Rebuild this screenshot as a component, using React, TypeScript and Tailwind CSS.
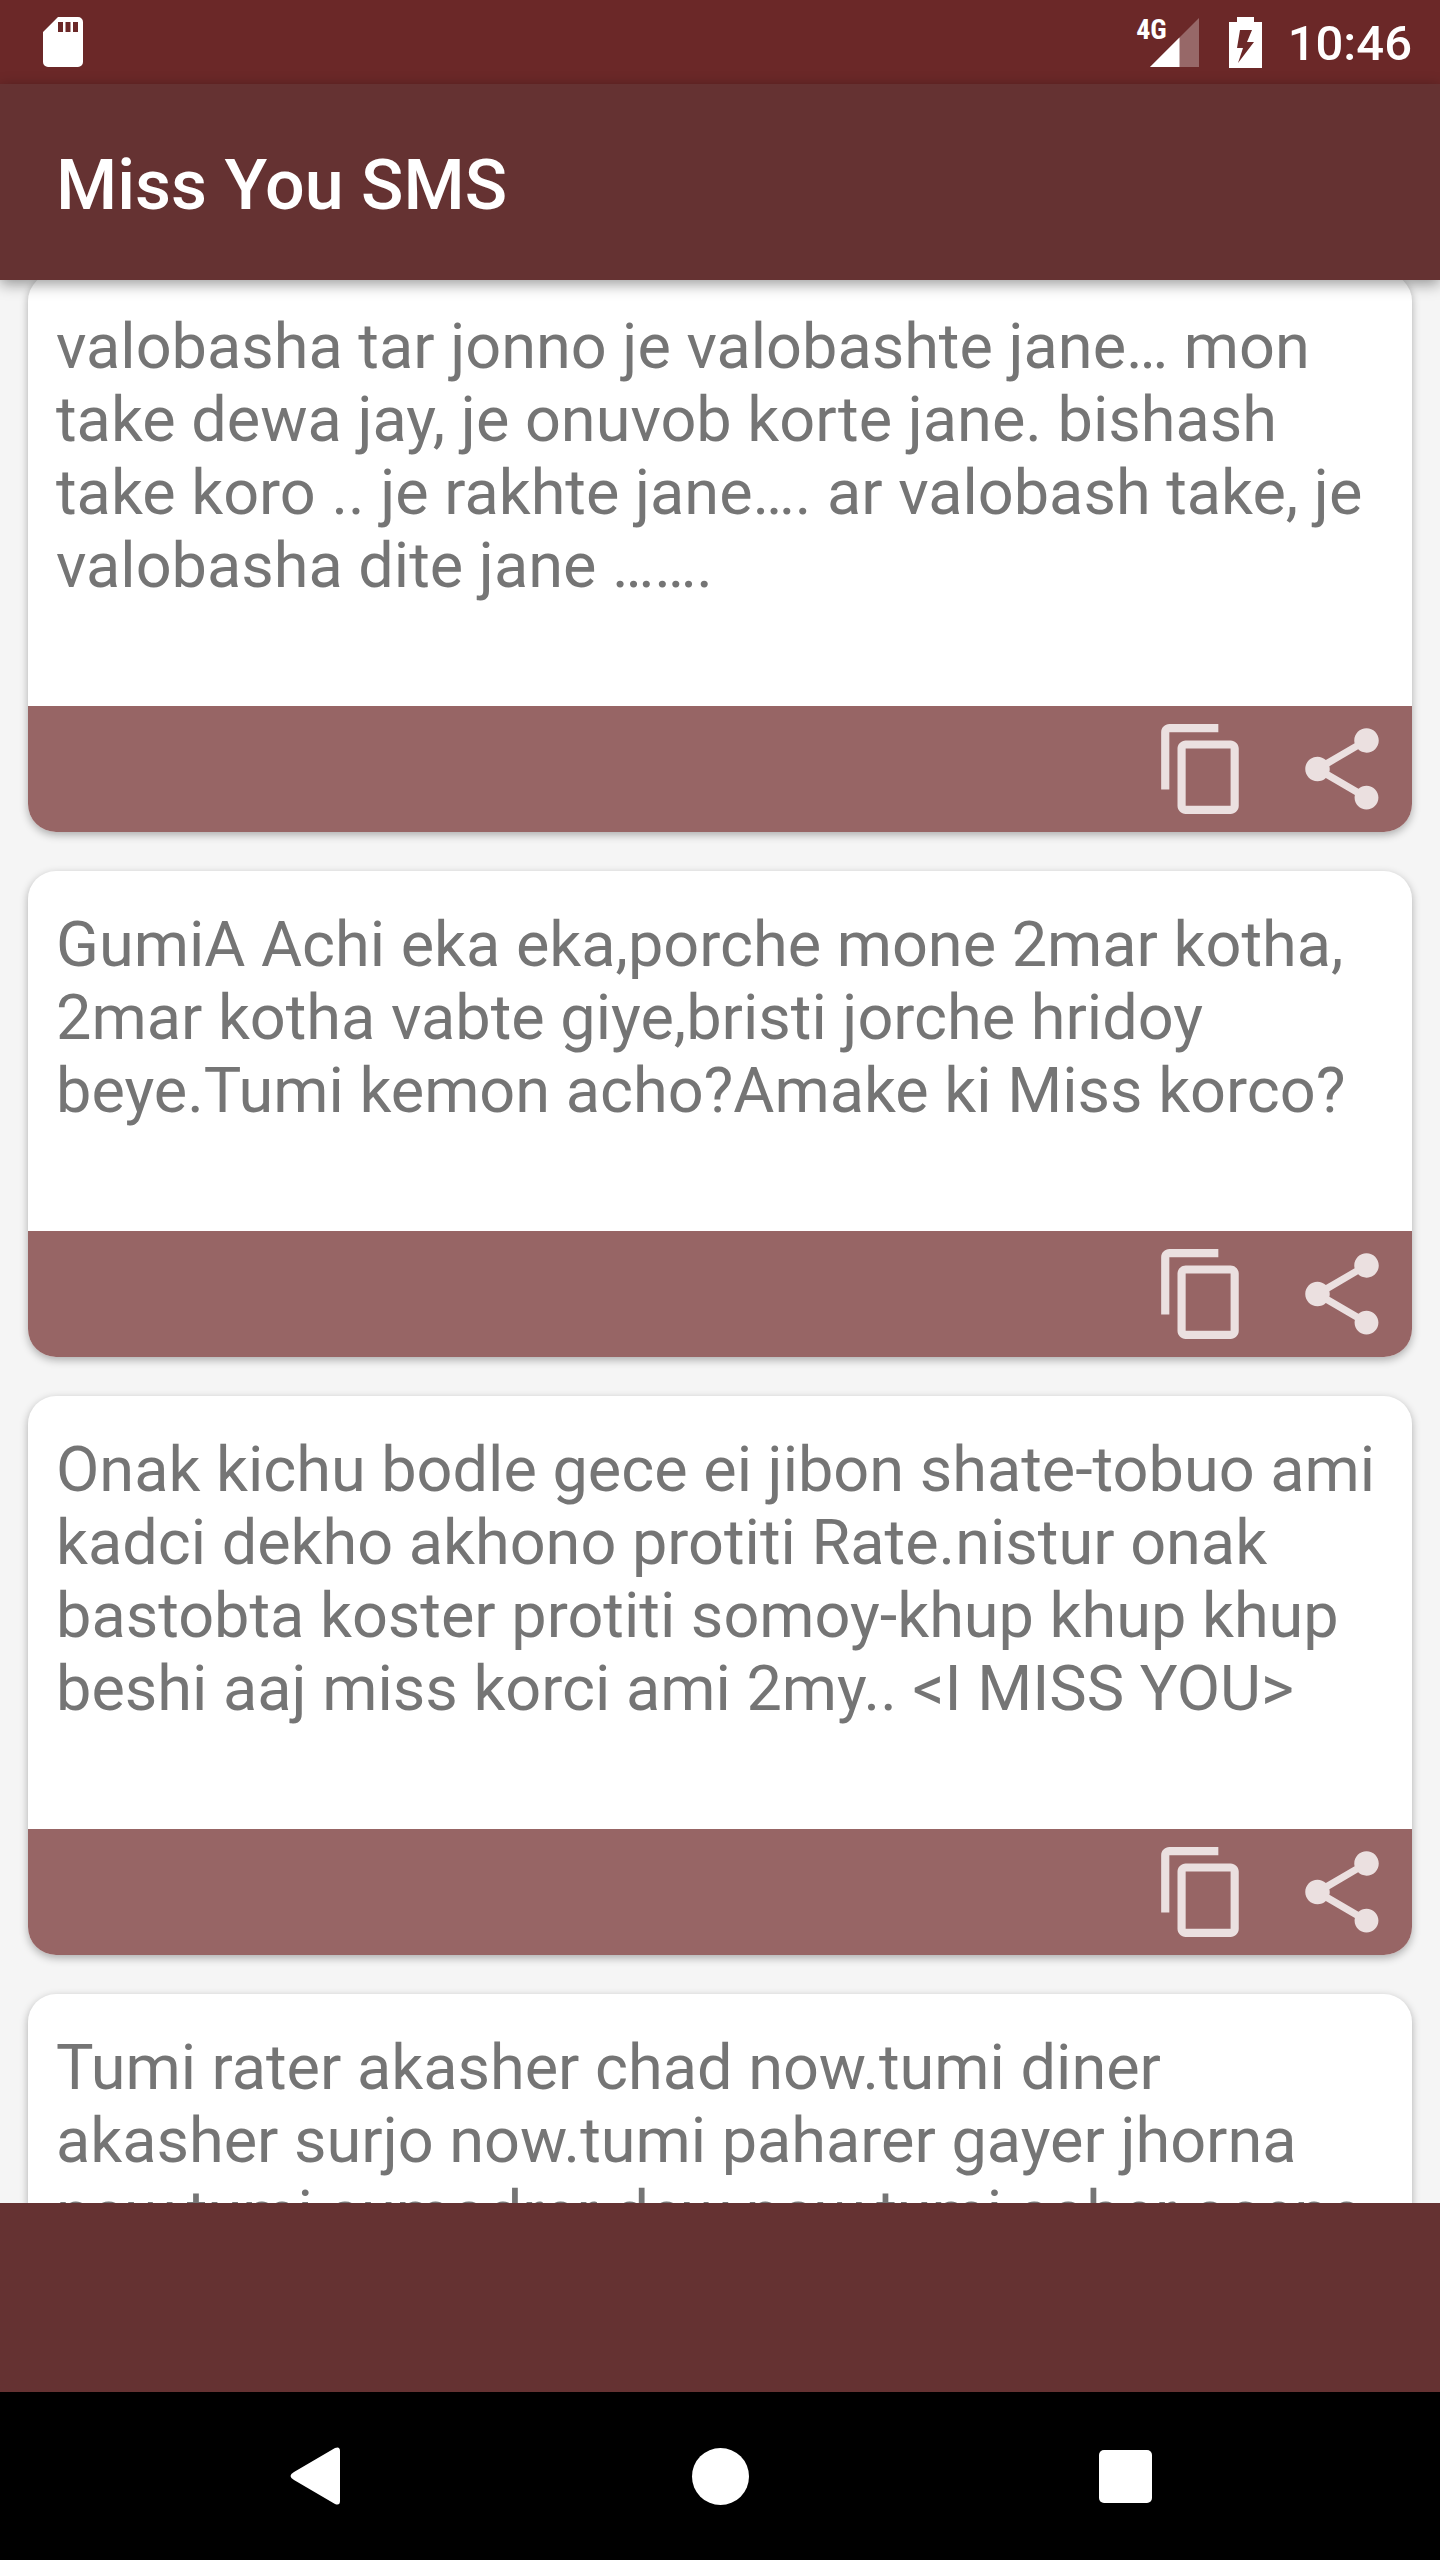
import React from 'react';

const messages = [
  'valobasha tar jonno je valobashte jane… mon take dewa jay, je onuvob korte jane. bishash take koro .. je rakhte jane…. ar valobash take, je valobasha dite jane …….',
  'GumiA Achi eka eka,porche mone 2mar kotha, 2mar kotha vabte giye,bristi jorche hridoy beye.Tumi kemon acho?Amake ki Miss korco?',
  'Onak kichu bodle gece ei jibon shate-tobuo ami kadci dekho akhono protiti Rate.nistur onak bastobta koster protiti somoy-khup khup khup beshi aaj miss korci ami 2my.. <I MISS YOU>',
  'Tumi rater akasher chad now.tumi diner akasher surjo now.tumi paharer gayer jhorna now.tumi sumodrer dew now.tumi sober ocene',
];

function StatusBar() {
  return (
    <header className="flex h-[84px] shrink-0 items-center justify-between bg-[#6b2828] pr-7 pl-[43px] text-white">
      <svg className="h-[50px] w-10" viewBox="0 0 40 50" fill="currentColor" aria-label="SD card">
        <path
          fillRule="evenodd"
          d="M15 0H35a5 5 0 0 1 5 5V45a5 5 0 0 1-5 5H5a5 5 0 0 1-5-5V15ZM15 5v10h5V5Zm7.500 0v10h5V5ZM30 5v10h5V5Z"
        />
      </svg>
      <div className="flex items-center">
        <div className="relative mr-[30px]">
          <svg className="h-[49px] w-[49px]" viewBox="0 0 49 49" aria-label="Signal">
            <path d="M49 0V49H0Z" fill="#fff" fillOpacity=".3" />
            <path d="M29.500 19.500V49H0Z" fill="#fff" />
          </svg>
          <span className="absolute top-0 right-8 font-['Roboto_Condensed','Roboto',sans-serif] text-[28px] leading-6 font-bold">
            4G
          </span>
        </div>
        <svg className="mr-[26px] h-[51px] w-[33px]" viewBox="0 0 33 51" aria-label="Battery charging">
          <path
            fill="#fff"
            fillRule="evenodd"
            d="M8 0H25V5H33V51H0V5H8ZM11 13L8 31H14L9 46L25 25H18L23 13Z"
          />
        </svg>
        <time className="pt-1 text-[49px] leading-[56px] font-medium">10:46</time>
      </div>
    </header>
  );
}

function MessageCard({ text }: { text: string }) {
  return (
    <article className="shrink-0 overflow-hidden rounded-[28px] bg-white shadow-[0_3px_8px_rgba(0,0,0,0.3)]">
      <p className="px-7 pt-[37px] pb-[104px] text-[63px] leading-[73px] text-[#757575]">{text}</p>
      <div className="flex justify-end gap-[42px] bg-[#976565] px-[21px] py-3.5 text-[#ebe0e0]">
        <button type="button" aria-label="Copy">
          <svg className="h-[98px] w-[98px]" viewBox="0 0 24 24" fill="currentColor">
            <path d="M16 1H4c-1.1 0-2 .9-2 2v14h2V3h12V1zm3 4H8c-1.1 0-2 .9-2 2v14c0 1.1.9 2 2 2h11c1.1 0 2-.9 2-2V7c0-1.1-.9-2-2-2zm0 16H8V7h11v14z" />
          </svg>
        </button>
        <button type="button" aria-label="Share">
          <svg className="h-[98px] w-[98px]" viewBox="0 0 24 24" fill="currentColor">
            <path d="M18 16.08c-.76 0-1.44.3-1.96.77L8.910 12.700c.05-.23.09-.46.09-.7s-.04-.47-.09-.7l7.050-4.110c.54.5 1.250.81 2.040.81 1.660 0 3-1.340 3-3s-1.340-3-3-3-3 1.340-3 3c0 .24.04.47.09.7L8.040 9.810C7.500 9.310 6.790 9 6 9c-1.660 0-3 1.340-3 3s1.340 3 3 3c.79 0 1.500-.31 2.040-.81l7.120 4.160c-.05.21-.08.43-.08.65 0 1.610 1.310 2.920 2.920 2.920 1.610 0 2.920-1.310 2.920-2.920s-1.310-2.920-2.920-2.920z" />
          </svg>
        </button>
      </div>
    </article>
  );
}

export default function App() {
  return (
    <div className="flex h-screen flex-col overflow-hidden bg-[#f5f5f5] font-['Roboto',sans-serif]">
      <StatusBar />
      <div className="z-10 flex h-[196px] shrink-0 items-center bg-[#653232] px-14 pt-1.5 shadow-[0_4px_14px_rgba(0,0,0,0.4)]">
        <h1 className="text-[70px] leading-[82px] font-medium text-white">Miss You SMS</h1>
      </div>
      <main className="flex min-h-0 flex-1 flex-col overflow-y-auto [scrollbar-width:none]">
        <div className="-mt-[7px] flex flex-col gap-[39px] px-7">
          {messages.map((text) => (
            <MessageCard key={text} text={text} />
          ))}
        </div>
      </main>
      <div className="h-[189px] shrink-0 bg-[#653232]" />
      <nav className="flex h-[168px] shrink-0 items-center justify-center gap-[293px] bg-black text-white">
        <button type="button" aria-label="Back" className="flex w-28 justify-center">
          <svg className="h-[58px] w-[50px]" viewBox="0 0 50 58" fill="currentColor">
            <path d="M45 1Q50-1 50 4V54Q50 59 45 57L4 33Q-3 29 4 25Z" />
          </svg>
        </button>
        <button type="button" aria-label="Home" className="flex w-28 justify-center">
          <span className="size-[57px] rounded-full bg-white" />
        </button>
        <button type="button" aria-label="Recent apps" className="flex w-28 justify-center">
          <span className="size-[53px] rounded-[5px] bg-white" />
        </button>
      </nav>
    </div>
  );
}
